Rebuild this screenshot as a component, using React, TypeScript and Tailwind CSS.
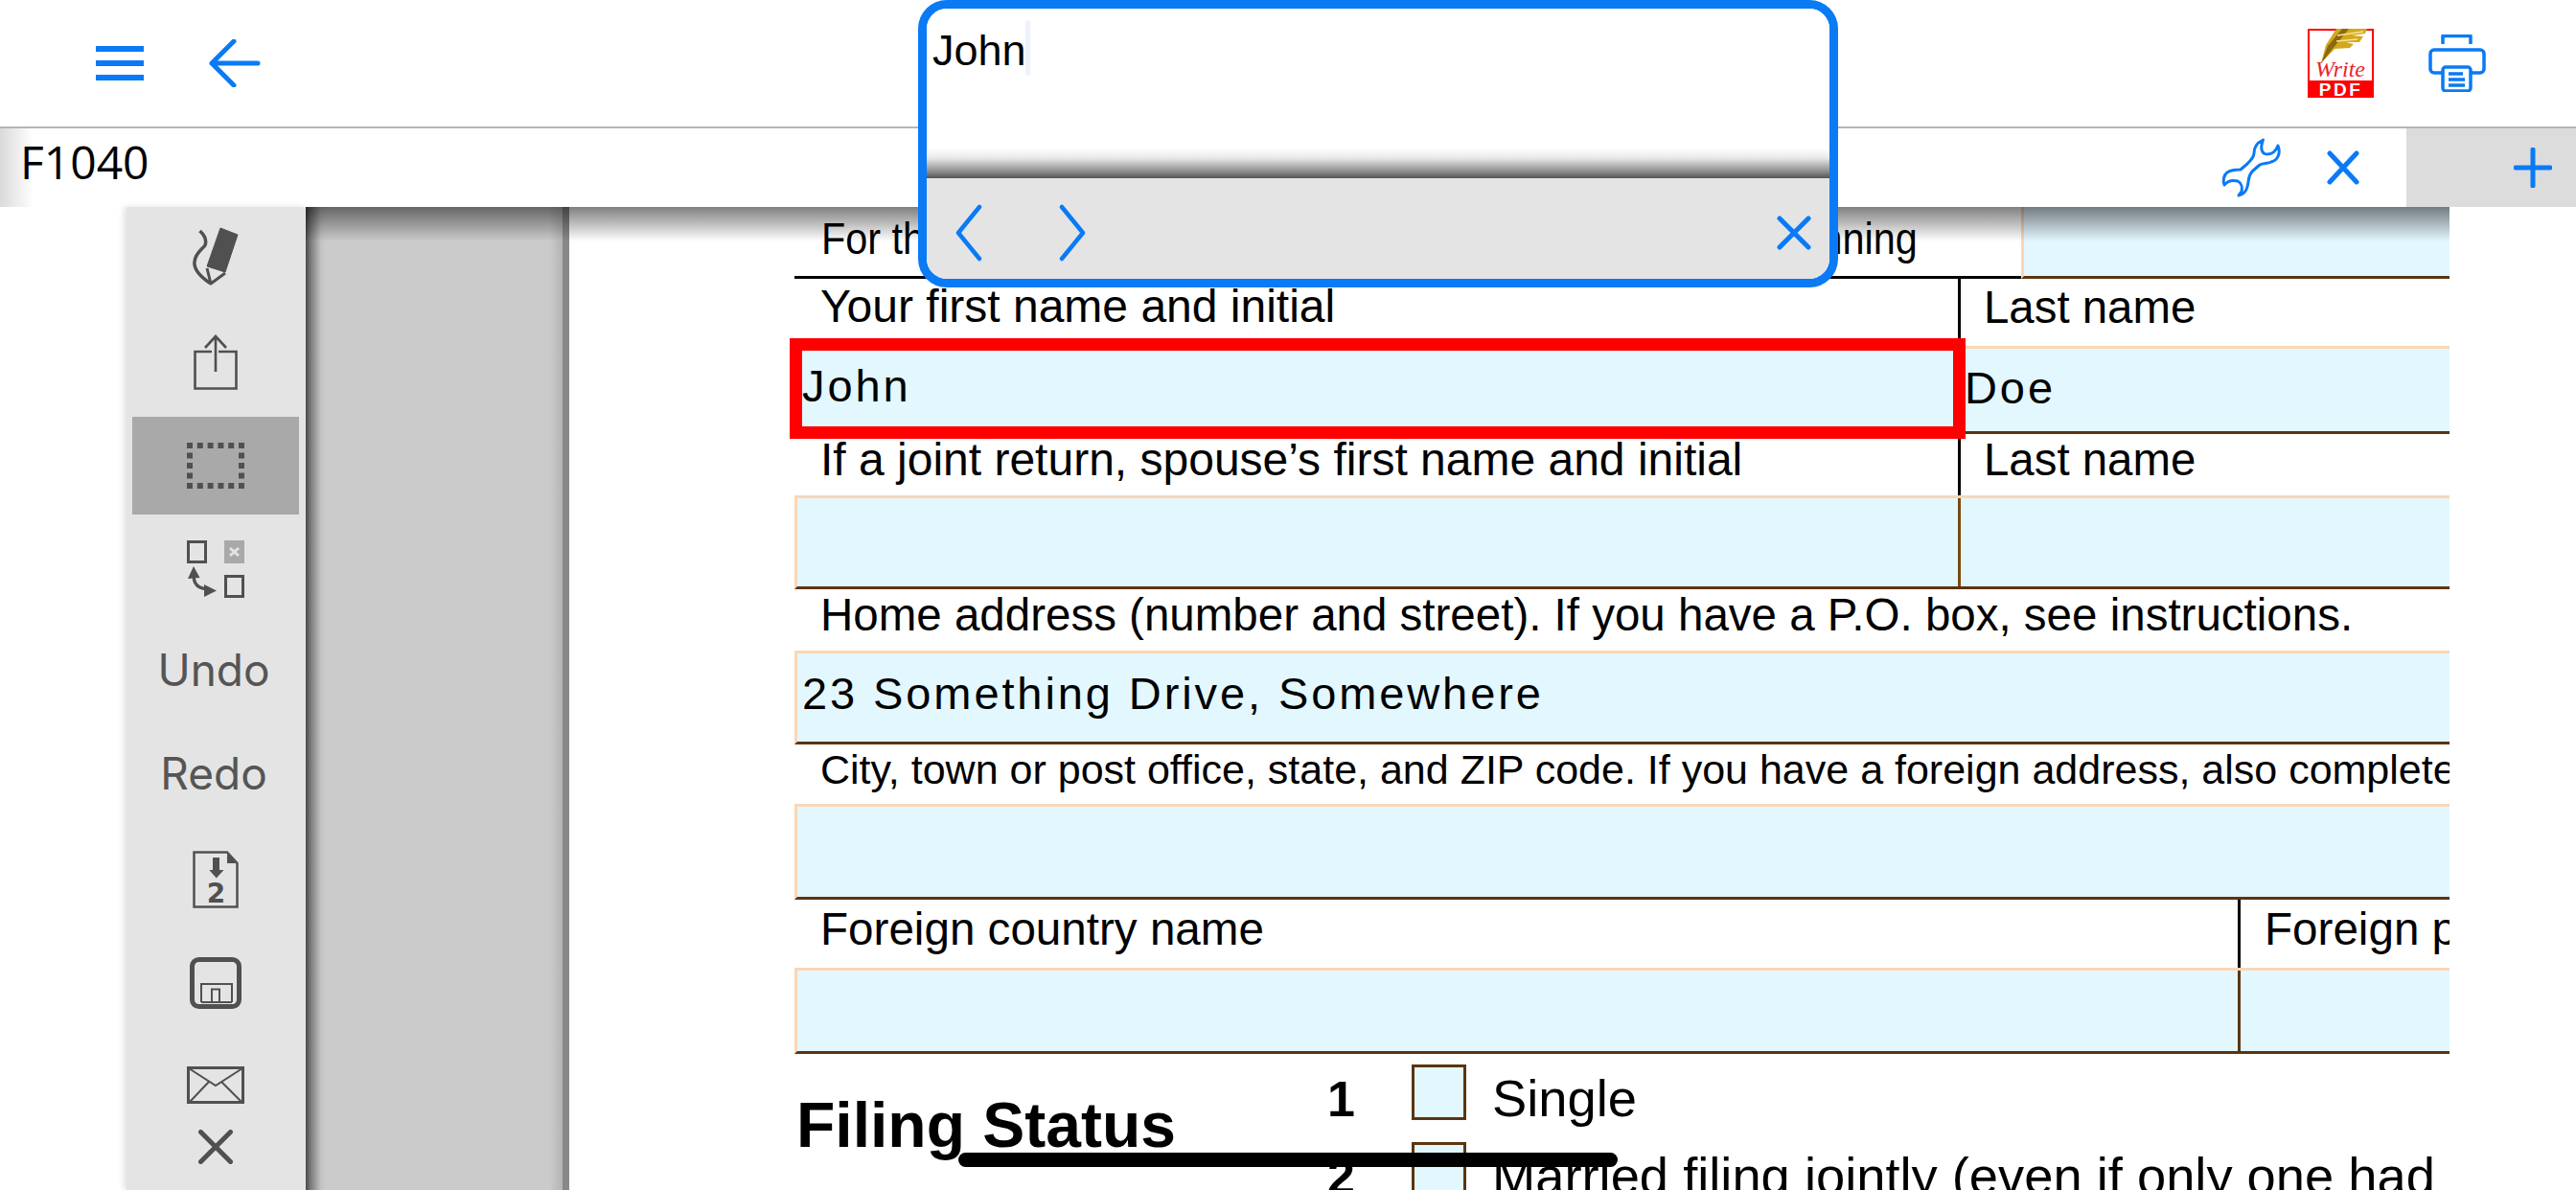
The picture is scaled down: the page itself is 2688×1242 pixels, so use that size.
const BLUE = "#0a7af5"
const GREY = "#505050"

function TopBar() {
  return (
    <div className="flex h-[134px] items-center justify-between border-b-2 border-[#b5b5b5] bg-white pl-[100px] pr-[94px]">
      <div className="flex items-center gap-[68px]">
        <svg width="50" height="36" viewBox="0 0 50 36" fill={BLUE}>
          <rect y="0" width="50" height="6" />
          <rect y="15" width="50" height="6" />
          <rect y="30" width="50" height="6" />
        </svg>
        <svg width="54" height="50" viewBox="0 0 54 50" fill="none" stroke={BLUE} strokeWidth="5" strokeLinecap="round" strokeLinejoin="round">
          <path d="M51 25 H3 M26 2 L3 25 L26 48" />
        </svg>
      </div>
      <div className="flex items-center gap-[57px]">
        <WritePdfLogo />
        <svg width="60" height="60" viewBox="0 0 60 60" fill="none" stroke={BLUE} strokeWidth="3.5" strokeLinejoin="round">
          <path d="M15 10 V1.5 H44 V10" />
          <path d="M15 40 H6 a4 4 0 0 1 -4 -4 V20 a4 4 0 0 1 4 -4 H54 a4 4 0 0 1 4 4 V36 a4 4 0 0 1 -4 4 H44" />
          <rect x="15" y="34" width="29" height="25" rx="3" />
          <path d="M21 41 H36 M21 47 H38 M21 53 H38" />
        </svg>
      </div>
    </div>
  )
}

function WritePdfLogo() {
  return (
    <svg width="69" height="72" viewBox="0 0 69 72">
      <rect width="69" height="72" fill="#ff0000" />
      <rect x="2" y="2" width="65" height="52" fill="#ffffff" />
      <path d="M14 36 L19 17 L30 0 L62 0 L60 5 L46 7 L58 8 L54 14 L40 14 L48 16 L44 20 L28 21 Z" fill="#d4a81e" />
      <path d="M14 36 L21 18 L36 0 L43 0 L26 21 Z" fill="#8a6a10" />
      <path d="M31 7 L58 3 M30 13 L52 11" stroke="#f7e68f" strokeWidth="1.5" fill="none" />
      <text x="34" y="50" textAnchor="middle" fill="#e8242c" className="font-['Liberation_Serif',serif] text-[24px] italic">
        Write
      </text>
      <text x="34.5" y="69.5" textAnchor="middle" fill="#ffffff" className="font-['Liberation_Sans',sans-serif] text-[19px] font-bold tracking-[2.5px]">
        PDF
      </text>
    </svg>
  )
}

function TabBar() {
  return (
    <div className="flex h-[82px] items-center bg-[linear-gradient(to_right,#dadada,#ffffff_35px)]">
      <span className="pb-[12px] pl-[21px] font-['Open_Sans',sans-serif] text-[48px] leading-none text-black">F1040</span>
      <div className="ml-auto flex items-center">
        <svg width="100" height="76" viewBox="0 0 100 76" fill="none" stroke={BLUE} strokeWidth="3" strokeLinejoin="round">
          <path d="M61.5 9 C55 12 52 17 52 23 C52 27 49 30 45 34 L38 40 C33 40 27 41 24 43 C20 46 19.5 52 21 56 C25 51 31 51 35 52 C39 54 40 59 39 63 L36 67 C41 66 44 62 45 58 C47 52 45 48 50 42 L58 35 C62 33 66 34 70 32 C77 30 80 23 77 15 C75 20 72 24 66 24 C60 24 58 18 61.5 9 Z" />
        </svg>
        <svg className="ml-[28px]" width="34" height="36" viewBox="0 0 34 36" fill="none" stroke={BLUE} strokeWidth="5" strokeLinecap="round">
          <path d="M3 3 L31 33 M31 3 L3 33" />
        </svg>
        <div className="ml-[49px] flex h-[82px] w-[177px] items-center bg-[#dcdcdc] pl-[112px]">
          <svg width="40" height="42" viewBox="0 0 40 42" fill="none" stroke={BLUE} strokeWidth="5" strokeLinecap="round">
            <path d="M20 2 V40 M2 21 H38" />
          </svg>
        </div>
      </div>
    </div>
  )
}

function SideItem({ active, children, className }: { active?: boolean; children: React.ReactNode; className?: string }) {
  return (
    <div className={`flex h-[102px] items-center justify-center ${active ? "bg-[#a9a9a9]" : ""} ${className || ""}`}>
      {children}
    </div>
  )
}

const DOT_X = [0, 10.8, 21.6, 32.4, 43.2, 54]
const DOT_Y = [10.5, 21, 31.5]

function Sidebar() {
  return (
    <div className="relative flex w-[187px] flex-col gap-[6px] bg-[#e4e4e4] pl-[6px] pr-[7px] pt-[3px] shadow-[-3px_0_6px_rgba(0,0,0,0.12)]">
      <SideItem>
        <svg width="90" height="85" viewBox="0 0 90 85" fill="none" stroke={GREY} strokeLinejoin="round">
          <path d="M50 10 L68 17 L55 56 L36 50 Z" fill={GREY} />
          <path d="M36 52 L40 68 L55 57" strokeWidth="3" />
          <path d="M28.5 13 C33 17 36 22 34 28 C30 33 24 36 23 45 C22 52 28 60 40 68" strokeWidth="3.5" />
        </svg>
      </SideItem>
      <SideItem>
        <svg width="46" height="58" viewBox="0 0 46 58" fill="none" stroke={GREY} strokeWidth="2.6">
          <path d="M19 18 H1.5 V56.5 H44.5 V18 H26" />
          <path d="M23 2 V39 M12 14 L23 2 L34 14" />
        </svg>
      </SideItem>
      <SideItem active>
        <svg width="60" height="48" viewBox="0 0 60 48" fill={GREY}>
          {DOT_X.map(x => (
            <g key={x}>
              <rect x={x} y="0" width="6" height="6" />
              <rect x={x} y="42" width="6" height="6" />
            </g>
          ))}
          {DOT_Y.map(y => (
            <g key={y}>
              <rect x="0" y={y} width="6" height="6" />
              <rect x="54" y={y} width="6" height="6" />
            </g>
          ))}
        </svg>
      </SideItem>
      <SideItem>
        <svg width="60" height="60" viewBox="0 0 60 60" fill="none">
          <rect x="1.5" y="1.5" width="18" height="21" stroke={GREY} strokeWidth="3" />
          <rect x="39" y="0" width="21" height="24" fill="#a9a9a9" />
          <path d="M45 8 L54 16 M54 8 L45 16" stroke="#e4e4e4" strokeWidth="3" />
          <rect x="40.5" y="37.5" width="18" height="21" stroke={GREY} strokeWidth="3" />
          <path d="M7 36 C7 46 12 50 20 50.5" stroke={GREY} strokeWidth="3.2" />
          <path d="M7 27 L1 40 L13.5 39 Z M31 52.5 L18 46 L18 59 Z" fill={GREY} />
        </svg>
      </SideItem>
      <SideItem>
        <span className="pb-[6px] pr-[4px] font-['Inter',sans-serif] text-[46px] leading-none text-[#555555]">Undo</span>
      </SideItem>
      <SideItem>
        <span className="pb-[6px] pr-[4px] font-['Inter',sans-serif] text-[46px] leading-none text-[#555555]">Redo</span>
      </SideItem>
      <SideItem>
        <svg width="48" height="60" viewBox="0 0 48 60" fill="none">
          <path d="M1.5 1.5 H36 L46.5 13 V58.5 H1.5 Z" stroke={GREY} strokeWidth="2.5" />
          <path d="M36 2 L46 13 H36 Z" fill={GREY} />
          <path d="M21 7 H28 V20 H32.5 L24.8 28.5 L17.3 20 H21 Z" fill={GREY} />
          <text x="24.5" y="54" textAnchor="middle" fill={GREY} className="font-['DejaVu_Sans',sans-serif] text-[28px] font-bold">
            2
          </text>
        </svg>
      </SideItem>
      <SideItem>
        <svg width="54" height="54" viewBox="0 0 54 54" fill="none" stroke={GREY}>
          <rect x="2.5" y="2.5" width="49" height="49" rx="7" strokeWidth="5" />
          <path d="M12 47 V28 H44 V47 M12 47 H44" strokeWidth="2" />
          <path d="M23 47 V33.5 H31 V47" strokeWidth="2" />
        </svg>
      </SideItem>
      <SideItem className="!h-[98px]">
        <svg width="60" height="39" viewBox="0 0 60 39" fill="none" stroke={GREY}>
          <rect x="1.5" y="1.5" width="57" height="36" strokeWidth="3" />
          <path d="M2 2 L30 20 L58 2 M3 37 L23 16 M57 37 L36 16" strokeWidth="2" />
        </svg>
      </SideItem>
      <div className="absolute bottom-[27px] left-[75px]">
        <svg className="block" width="36" height="36" viewBox="0 0 36 36" fill="none" stroke={GREY} strokeWidth="5" strokeLinecap="round">
          <path d="M2.5 2.5 L33.5 33.5 M33.5 2.5 L2.5 33.5" />
        </svg>
      </div>
    </div>
  )
}

const FIELD = "bg-[#e3f7ff] border-t-[3px] border-t-[#fad7b5] border-b-[3px] border-b-[#5a3510]"
const FILLED = "font-['Liberation_Sans',sans-serif] text-[47px] leading-none tracking-[2.9px] text-black"

function Label({ children, className }: { children: React.ReactNode; className: string }) {
  return <div className={`${className} whitespace-nowrap pl-[27px] leading-none`}>{children}</div>
}

function NameRows() {
  return (
    <>
      <div className="flex h-[75px]">
        <div className="w-[1280px] shrink-0 border-b-[3px] border-black pl-[28px] pt-[10px]">
          <div className="origin-left scale-x-90 whitespace-nowrap text-[46px] leading-none">
            For the year Jan. 1–Dec. 31, 2017, or other tax year beginning
          </div>
        </div>
        <div className="flex-1 border-b-[3px] border-l-[3px] border-b-[#5a3510] border-l-[#fad7b5] bg-[#e3f7ff]" />
      </div>

      <div className="flex h-[70px]">
        <div className="w-[1214px] shrink-0"><Label className="pt-[5px] text-[48px]">Your first name and initial</Label></div>
        <div className="flex-1 border-l-[3px] border-black pl-[24px] pt-[6px] text-[47.4px] leading-none">Last name</div>
      </div>
      <div className={`flex h-[92px] border-l-[3px] border-l-[#fad7b5] ${FIELD}`}>
        <div className="w-[1211px] shrink-0 pl-[5px] pt-[15px]"><span className={FILLED}>John</span></div>
        <div className="flex-1 border-l-[3px] border-[#fad7b5] pl-[4px] pt-[17px]"><span className={FILLED}>Doe</span></div>
      </div>

      <div className="flex h-[64px]">
        <div className="w-[1214px] shrink-0"><Label className="pt-[3px] text-[48px]">If a joint return, spouse’s first name and initial</Label></div>
        <div className="flex-1 border-l-[3px] border-black pl-[24px] pt-[3px] text-[47.4px] leading-none">Last name</div>
      </div>
      <div className={`flex h-[98px] border-l-[3px] border-l-[#fad7b5] ${FIELD}`}>
        <div className="w-[1211px] shrink-0" />
        <div className="flex-1 border-l-[3px] border-[#7a4a10]" />
      </div>
    </>
  )
}

function AddressRows() {
  return (
    <>
      <div className="h-[64px]"><Label className="pt-[3px] text-[47.5px]">Home address (number and street). If you have a P.O. box, see instructions.</Label></div>
      <div className={`h-[98px] border-l-[3px] border-l-[#fad7b5] pl-[5px] pt-[18px] ${FIELD}`}>
        <span className={FILLED}>23 Something Drive, Somewhere</span>
      </div>

      <div className="h-[62px]"><Label className="pt-[5px] text-[43px]">City, town or post office, state, and ZIP code. If you have a foreign address, also complete spaces below</Label></div>
      <div className={`h-[100px] border-l-[3px] border-l-[#fad7b5] ${FIELD}`} />

      <div className="flex h-[71px]">
        <div className="w-[1506px] shrink-0"><Label className="pt-[7px] text-[47.6px]">Foreign country name</Label></div>
        <div className="min-w-0 flex-1 overflow-hidden whitespace-nowrap border-l-[3px] border-black pl-[25px] pt-[7px] text-[47.6px] leading-none">Foreign postal code</div>
      </div>
      <div className={`flex h-[90px] border-l-[3px] border-l-[#fad7b5] ${FIELD}`}>
        <div className="w-[1503px] shrink-0" />
        <div className="flex-1 border-l-[3px] border-[#5a3510]" />
      </div>
    </>
  )
}

function FilingOption({ num, text }: { num: string; text: string }) {
  return (
    <div className="flex h-[81px] leading-none">
      <div className="w-[88px] shrink-0 pt-[10px] text-[52px] font-bold">{num}</div>
      <div className="h-[58px] w-[57px] shrink-0 border-[3px] border-[#5a3510] bg-[#e3f7ff]" />
      <div className="whitespace-nowrap pl-[27px] pt-[9px] text-[54.3px]">{text}</div>
    </div>
  )
}

function FilingStatus() {
  return (
    <div className="flex">
      <div className="w-[556px] shrink-0 pl-[2px] pt-[41px] text-[66px] font-bold leading-none">Filing Status</div>
      <div className="min-w-0 flex-1 pt-[11px]">
        <FilingOption num="1" text="Single" />
        <FilingOption num="2" text="Married filing jointly (even if only one had" />
      </div>
    </div>
  )
}

function EditPopup() {
  return (
    <div className="absolute left-[958px] top-0 z-10 h-[300px] w-[960px] overflow-hidden rounded-[30px] border-[9px] border-[#0a7af5] bg-white">
      <div className="relative h-[177px] bg-[linear-gradient(to_bottom,#ffffff_146px,#e8e8e8_156px,#8c8c8c_170px,#555555_177px)] pl-[6px] pt-[21px] font-['Liberation_Sans',sans-serif] text-[45px] leading-none">
        John
        <span className="absolute left-[103px] top-[12px] h-[58px] w-[5px] rounded-full bg-[#eef2ff]" />
      </div>
      <div className="flex h-[105px] items-center bg-[#e4e4e4] pl-[30px] pr-[19px] pt-[9px]">
        <svg width="28" height="62" viewBox="0 0 28 62" fill="none" stroke={BLUE} strokeWidth="4.5" strokeLinecap="round" strokeLinejoin="round">
          <path d="M25 4 L3 31 L25 58" />
        </svg>
        <svg className="ml-[80px]" width="28" height="62" viewBox="0 0 28 62" fill="none" stroke={BLUE} strokeWidth="4.5" strokeLinecap="round" strokeLinejoin="round">
          <path d="M3 4 L25 31 L3 58" />
        </svg>
        <svg className="ml-auto" width="36" height="36" viewBox="0 0 36 36" fill="none" stroke={BLUE} strokeWidth="5" strokeLinecap="round">
          <path d="M3 3 L33 33 M33 3 L3 33" />
        </svg>
      </div>
    </div>
  )
}

export default function App() {
  return (
    <div className="relative h-[1242px] w-[2688px] overflow-hidden bg-white font-['Liberation_Sans',sans-serif] text-black">
      <TopBar />
      <TabBar />
      <div className="flex h-[1026px]">
        <div className="flex w-[319px] justify-end"><Sidebar /></div>
        <div className="relative flex w-[2237px]">
          <div className="w-[275px] border-r-[7px] border-[#888888] bg-[linear-gradient(to_right,#484848_0,#7a7a7a_5px,#c4c4c4_16px,#cbcbcb_22px,#cbcbcb_254px,#b4b4b4_268px)]" />
          <div className="relative min-w-0 flex-1 overflow-hidden bg-white pl-[235px]">
            <NameRows />
            <AddressRows />
            <FilingStatus />
            <div className="absolute left-[230px] top-[137px] h-[105px] w-[1227px] border-[13px] border-[#ff0000]" />
          </div>
          <div className="absolute inset-x-0 top-0 h-[36px] bg-linear-to-b from-black/50 to-transparent" />
        </div>
      </div>
      <EditPopup />
      <div className="absolute bottom-[24px] left-[1000px] z-20 h-[15px] w-[688px] rounded-full bg-black" />
    </div>
  )
}
